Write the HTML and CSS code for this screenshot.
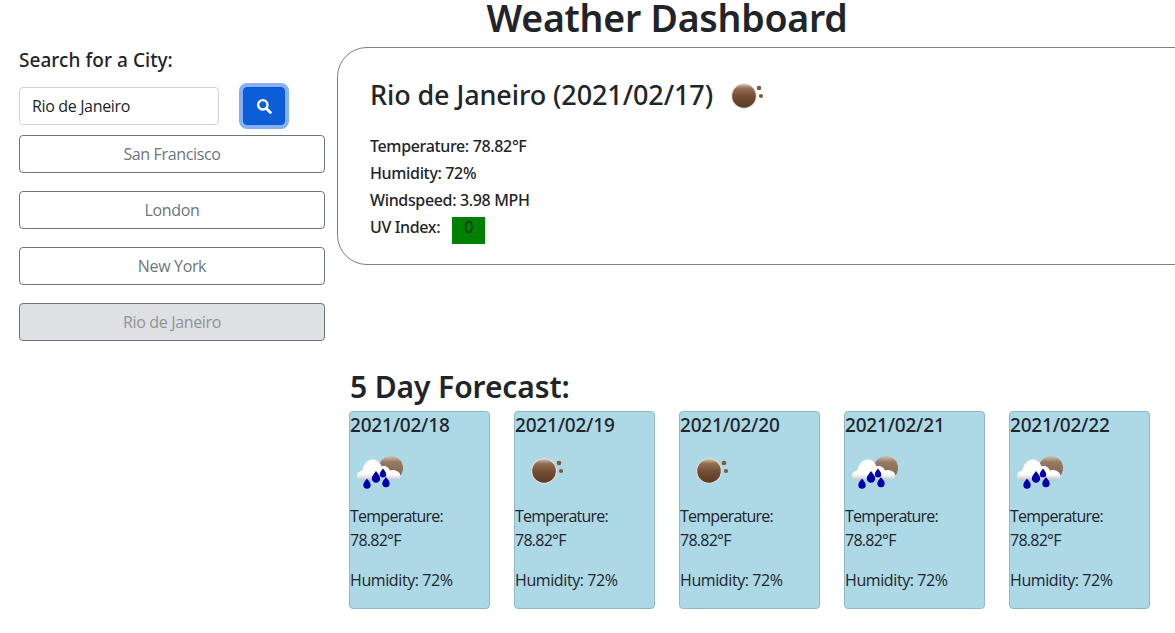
FILE: index.html
```html
<!DOCTYPE html>
<html lang="en">
<head>
<meta charset="utf-8">
<title>Weather Dashboard</title>
<link rel="stylesheet" href="styles.css">
</head>
<body>
<svg class="defs" width="0" height="0" aria-hidden="true">
  <defs>
    <filter id="soft" x="-10%" y="-10%" width="120%" height="120%"><feGaussianBlur stdDeviation="0.45"/></filter>
    <linearGradient id="ball" x1="0" y1="0" x2="0" y2="1">
      <stop offset="0" stop-color="#d0bcaa"/>
      <stop offset="0.18" stop-color="#937054"/>
      <stop offset="0.5" stop-color="#754f35"/>
      <stop offset="1" stop-color="#5b3a24"/>
    </linearGradient>
    <linearGradient id="ballPale" x1="0" y1="0" x2="0" y2="1">
      <stop offset="0" stop-color="#d2c2b2"/>
      <stop offset="0.25" stop-color="#977a62"/>
      <stop offset="1" stop-color="#7d6048"/>
    </linearGradient>
    <linearGradient id="cloud" x1="0" y1="0" x2="0" y2="1">
      <stop offset="0" stop-color="#ffffff"/>
      <stop offset="0.7" stop-color="#ffffff"/>
      <stop offset="1" stop-color="#b9c3ca"/>
    </linearGradient>
    <symbol id="moon" viewBox="0 0 50 50">
      <g filter="url(#soft)">
        <circle cx="24" cy="26" r="12.800" fill="#e6dbd2"/>
        <circle cx="24" cy="26" r="11.800" fill="url(#ball)"/>
        <circle cx="39" cy="18" r="2.300" fill="#7a5a44"/>
        <circle cx="41" cy="26" r="2.100" fill="#7a5a44"/>
      </g>
    </symbol>
    <symbol id="rain" viewBox="0 0 50 50">
      <g filter="url(#soft)">
        <circle cx="36" cy="23" r="12" fill="url(#ballPale)"/>
        <path d="M2 32c0-4 2.500-6 5.500-6.500C8.500 19 13 14 18.500 14.500c4 .4 6.500 3.200 8 7 3.500-1.200 7 .5 8.500 4 .6-.3 1.500-.5 2.500-.5 4 0 8 2.500 8 6 0 2.500-2.500 4.500-5 4.500H7c-3 0-5-1.500-5-3.500z" fill="url(#cloud)"/>
        <path d="M21 26c2.500 3.500 4.200 5 4.200 7.500a4.200 4.200 0 0 1-8.400 0c0-2.500 1.700-4 4.200-7.500z" fill="#0000a8"/>
        <path d="M12 33.500c2.200 3.100 3.700 4.400 3.700 6.500a3.700 3.700 0 0 1-7.400 0c0-2.100 1.500-3.400 3.700-6.500z" fill="#0000a8"/>
        <path d="M28 23.500c1.900 2.700 3.200 3.800 3.200 5.700a3.200 3.200 0 0 1-6.400 0c0-1.900 1.300-3 3.200-5.700z" fill="#0000a8"/>
        <path d="M31 32c2.200 3.100 3.700 4.400 3.700 6.500a3.700 3.700 0 0 1-7.400 0c0-2.100 1.500-3.400 3.700-6.500z" fill="#0000a8"/>
      </g>
    </symbol>
  </defs>
</svg>
<div class="page">
  <h1 class="title">Weather Dashboard</h1>
  <div class="layout">
    <aside class="sidebar">
      <label class="search-label" for="city">Search for a City:</label>
      <div class="search-row">
        <input class="search-input" id="city" type="text" value="Rio de Janeiro">
        <button class="search-btn" type="button" aria-label="Search">
          <svg class="search-icon" viewBox="0 0 16 16"><circle cx="6.800" cy="6.800" r="4.700" fill="none" stroke="#fff" stroke-width="2.400"/><path d="M10.400 10.400l4 4" stroke="#fff" stroke-width="2.800" stroke-linecap="round"/></svg>
        </button>
      </div>
      <div class="history">
        <button class="city-btn" type="button">San Francisco</button>
        <button class="city-btn" type="button">London</button>
        <button class="city-btn" type="button">New York</button>
        <button class="city-btn city-btn-active" type="button">Rio de Janeiro</button>
      </div>
    </aside>
    <main class="main">
      <section class="current">
        <div class="current-head">
          <h2 class="current-title">Rio de Janeiro (2021/02/17)</h2>
          <svg class="current-icon"><use href="#moon"/></svg>
        </div>
        <p class="stat">Temperature: 78.82°F</p>
        <p class="stat">Humidity: 72%</p>
        <p class="stat">Windspeed: 3.98 MPH</p>
        <p class="stat stat-uv">UV Index: <span class="uv">0</span></p>
      </section>
      <h2 class="forecast-title">5 Day Forecast:</h2>
      <div class="forecast">
        <article class="day">
          <h3 class="day-date">2021/02/18</h3>
          <svg class="day-icon"><use href="#rain"/></svg>
          <p class="day-temp">Temperature: 78.82°F</p>
          <p class="day-hum">Humidity: 72%</p>
        </article>
        <article class="day">
          <h3 class="day-date">2021/02/19</h3>
          <svg class="day-icon"><use href="#moon"/></svg>
          <p class="day-temp">Temperature: 78.82°F</p>
          <p class="day-hum">Humidity: 72%</p>
        </article>
        <article class="day">
          <h3 class="day-date">2021/02/20</h3>
          <svg class="day-icon"><use href="#moon"/></svg>
          <p class="day-temp">Temperature: 78.82°F</p>
          <p class="day-hum">Humidity: 72%</p>
        </article>
        <article class="day">
          <h3 class="day-date">2021/02/21</h3>
          <svg class="day-icon"><use href="#rain"/></svg>
          <p class="day-temp">Temperature: 78.82°F</p>
          <p class="day-hum">Humidity: 72%</p>
        </article>
        <article class="day">
          <h3 class="day-date">2021/02/22</h3>
          <svg class="day-icon"><use href="#rain"/></svg>
          <p class="day-temp">Temperature: 78.82°F</p>
          <p class="day-hum">Humidity: 72%</p>
        </article>
      </div>
    </main>
  </div>
</div>
</body>
</html>
```
FILE: styles.css
```css
* { box-sizing: border-box; }
html, body { margin: 0; height: 100%; overflow: hidden; background: #fff; }
body { font-family: "Open Sans", "Noto Sans", sans-serif; font-size: 16px; color: #212529; letter-spacing: -0.35px; }
.defs { display: block; height: 0; }
.page { width: 1334px; }
.title { margin: 0; height: 47px; line-height: 36px; font-family: "Noto Sans", sans-serif; font-size: 37.500px; font-weight: 600; text-align: center; letter-spacing: -0.25px; }
.layout { display: flex; }
.sidebar { width: 337px; padding-left: 19px; flex: none; }
.search-label { display: block; height: 40px; line-height: 26px; font-family: "Noto Sans", sans-serif; font-size: 19px; font-weight: 500; letter-spacing: 0.05px; }
.search-row { display: flex; gap: 24px; height: 38px; margin-bottom: 10px; }
.search-input { width: 200px; height: 38px; padding: 0 12px; border: 1px solid #ced4da; border-radius: 4px; font: inherit; letter-spacing: inherit; color: #212529; background: #fff; outline: none; }
.search-btn { width: 42px; height: 38px; padding: 0; display: flex; align-items: center; justify-content: center; background: #0b5ed7; border: 1px solid #0a58ca; border-radius: 4px; box-shadow: 0 0 0 4px #86b0f5; }
.search-icon { width: 16px; height: 16px; }
.history { display: flex; flex-direction: column; gap: 18px; width: 306px; }
.city-btn { height: 38px; padding: 0; border: 1px solid #6c757d; border-radius: 4px; background: #fff; color: #6c757d; font: inherit; letter-spacing: inherit; }
.city-btn-active { background: #dee0e3; color: #8f9499; }
.main { flex: 1; min-width: 0; }
.current { height: 218px; padding: 0 32px; border: 1px solid #808080; border-radius: 30px; }
.current-head { display: flex; align-items: center; gap: 7px; height: 85px; padding-top: 9px; }
.current-title { margin: 0; font-family: "Noto Sans", sans-serif; font-size: 27px; font-weight: 500; line-height: 32px; letter-spacing: -0.1px; }
.current-icon { width: 50px; height: 50px; flex: none; }
.stat { margin: 0; height: 27px; line-height: 27px; font-family: "Noto Sans", sans-serif; font-weight: 500; letter-spacing: -0.35px; }
.stat-uv { display: flex; gap: 12px; }
.uv { display: block; width: 33px; height: 27px; margin-top: 3px; line-height: 20px; background: #008000; text-align: center; font-family: "Open Sans", sans-serif; font-weight: 400; }
.forecast-title { margin: 104px 0 0 13px; height: 42px; line-height: 36px; font-family: "Noto Sans", sans-serif; font-size: 30px; font-weight: 600; letter-spacing: -0.1px; }
.forecast { display: flex; gap: 24px; padding-left: 12px; }
.day { width: 141px; height: 198px; flex: none; background: #add8e6; border: 1px solid #8fb9c8; border-radius: 4px; }
.day-date { margin: 0; font-family: "Noto Sans", sans-serif; font-size: 19px; font-weight: 500; line-height: 26px; letter-spacing: -0.2px; }
.day-icon { display: block; width: 50px; height: 50px; margin: 7px 0 0 5px; }
.day-temp { margin: 9px 0 0; line-height: 24px; width: 110px; letter-spacing: -0.75px; }
.day-hum { margin: 16px 0 0; line-height: 24px; letter-spacing: -0.4px; }
```
